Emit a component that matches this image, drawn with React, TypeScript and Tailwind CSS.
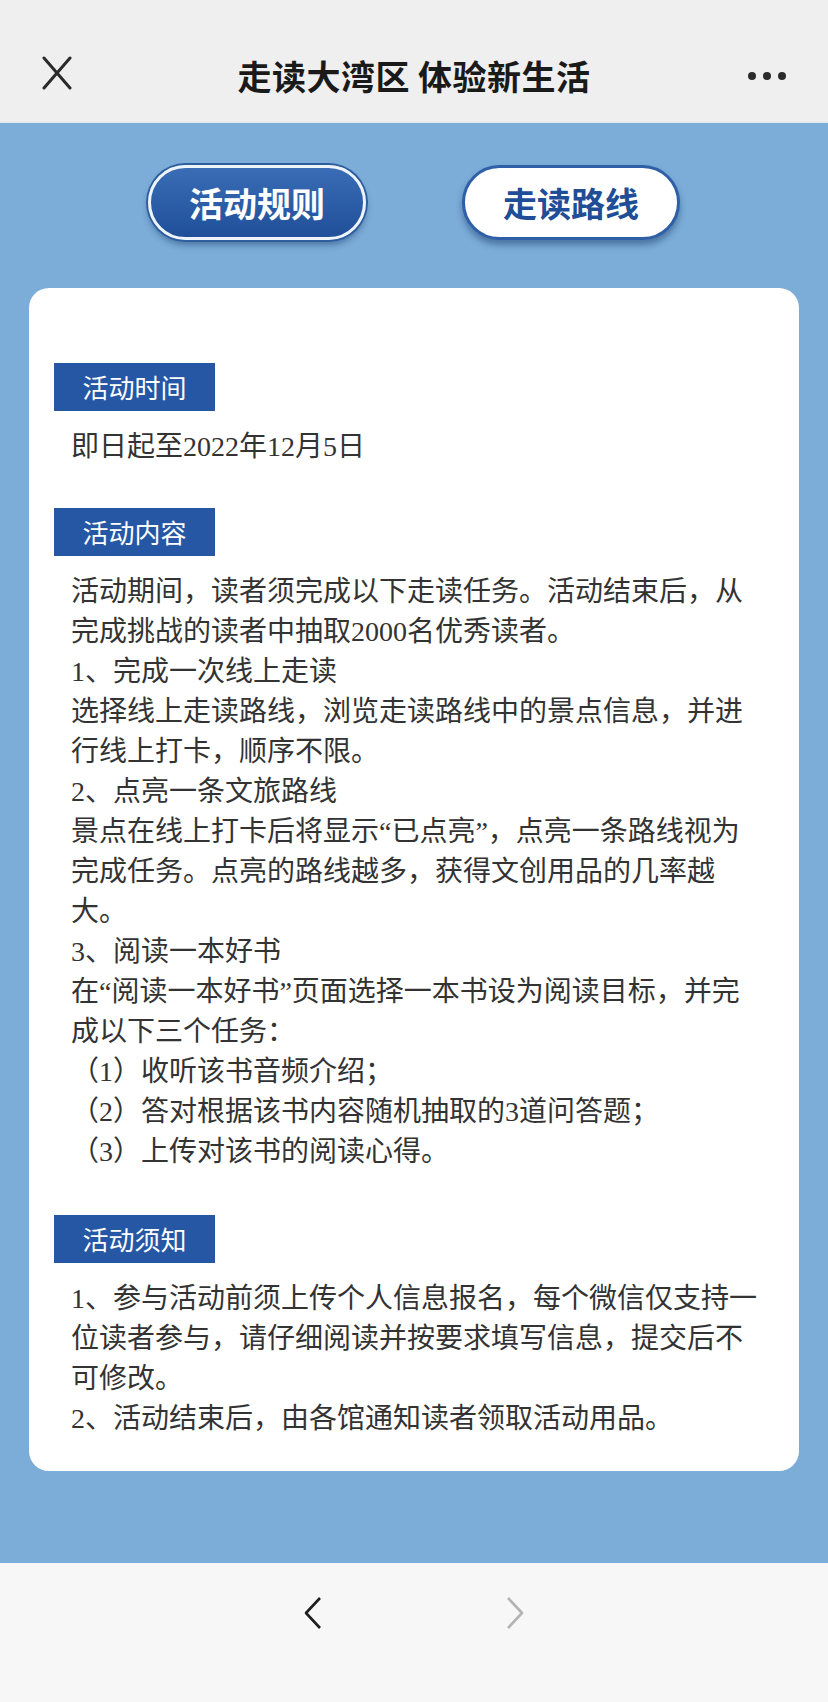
import type { ReactNode } from 'react'

const body = '"Liberation Serif", "Noto Sans CJK SC", serif'
const sans = '"Noto Sans CJK SC", "Noto Sans", sans-serif'

function Label({ children }: { children: ReactNode }) {
  return (
    <div
      className="flex h-[48px] w-[161px] items-center justify-center bg-[#2657a5] text-[26px] leading-none text-white"
      style={{ fontFamily: sans }}
    >
      {children}
    </div>
  )
}

function Block({ lines }: { lines: string[] }) {
  return (
    <div className="ml-[17px] mt-[16px] w-[692px] text-[28px] leading-[40px] text-[#333333]">
      {lines.map((l, i) => (
        <p key={i}>{l}</p>
      ))}
    </div>
  )
}

export default function App() {
  return (
    <div
      lang="zh-CN"
      className="flex h-[1702px] w-[828px] flex-col bg-[#7badd8]"
      style={{ fontFamily: body }}
    >
      {/* top bar */}
      <header className="h-[122px] bg-[#efefef] pt-[44px]">
        <div className="grid h-[64px] grid-cols-[1fr_auto_1fr] items-center px-[42px]">
          <svg width="30" height="34" viewBox="0 0 30 34" className="-mt-[6px]">
            <path d="M2 2 L28 32 M28 2 L2 32" stroke="#2a2a2a" strokeWidth="3" strokeLinecap="round" />
          </svg>
          <h1
            className="text-[34px] font-bold leading-none tracking-[0.5px] text-[#1a1a1a]"
            style={{ fontFamily: sans }}
          >
            走读大湾区 体验新生活
          </h1>
          <div className="flex justify-end gap-[7px] pr-[0px]">
            <span className="h-[8px] w-[8px] rounded-full bg-[#2b2b2b]" />
            <span className="h-[8px] w-[8px] rounded-full bg-[#2b2b2b]" />
            <span className="h-[8px] w-[8px] rounded-full bg-[#2b2b2b]" />
          </div>
        </div>
      </header>

      {/* blue area */}
      <main className="flex-1 border-t border-[#dfe9f2] pt-[42px]">
        <div className="flex justify-center gap-[96px]" style={{ fontFamily: sans }}>
          <button className="flex h-[75px] w-[218px] items-center justify-center rounded-full border-[3px] border-[#eef4fb] bg-gradient-to-b from-[#3a6db6] to-[#1f4f98] text-[34px] font-bold text-white shadow-[0_0_0_2px_#2f5e9f,0_5px_6px_rgba(20,50,100,0.45)]">
            活动规则
          </button>
          <button className="flex h-[75px] w-[218px] items-center justify-center rounded-full border-[3px] border-[#2f5fa6] bg-white text-[34px] font-bold text-[#1f4d97] shadow-[0_5px_6px_rgba(20,50,100,0.45)]">
            走读路线
          </button>
        </div>

        <section className="mx-[29px] mt-[48px] w-[770px] rounded-[20px] bg-white px-[25px] pb-[32px] pt-[75px]">
          <Label>活动时间</Label>
          <Block lines={['即日起至2022年12月5日']} />

          <div className="mt-[41px]">
            <Label>活动内容</Label>
          </div>
          <div className="ml-[17px] mt-[16px] w-[692px] text-[28px] leading-[40px] text-[#333333]">
            <p>活动期间，读者须完成以下走读任务。活动结束后，从完成挑战的读者中抽取2000名优秀读者。</p>
            <p>1、完成一次线上走读</p>
            <p>选择线上走读路线，浏览走读路线中的景点信息，并进行线上打卡，顺序不限。</p>
            <p>2、点亮一条文旅路线</p>
            <p>景点在线上打卡后将显示“已点亮”，点亮一条路线视为完成任务。点亮的路线越多，获得文创用品的几率越大。</p>
            <p>3、阅读一本好书</p>
            <p>在“阅读一本好书”页面选择一本书设为阅读目标，并完成以下三个任务：</p>
            <p>（1）收听该书音频介绍；</p>
            <p>（2）答对根据该书内容随机抽取的3道问答题；</p>
            <p>（3）上传对该书的阅读心得。</p>
          </div>

          <div className="mt-[43px]">
            <Label>活动须知</Label>
          </div>
          <div className="ml-[17px] mt-[16px] w-[692px] text-[28px] leading-[40px] text-[#333333]">
            <p>1、参与活动前须上传个人信息报名，每个微信仅支持一位读者参与，请仔细阅读并按要求填写信息，提交后不可修改。</p>
            <p>2、活动结束后，由各馆通知读者领取活动用品。</p>
          </div>
        </section>
      </main>

      {/* bottom nav */}
      <footer className="flex h-[139px] justify-center gap-[176px] bg-[#f7f7f7] pt-[33px]">
        <svg width="26" height="34" viewBox="0 0 26 34">
          <path d="M20 2 L6 17 L20 32" fill="none" stroke="#1e1e1e" strokeWidth="2.6" strokeLinejoin="round" />
        </svg>
        <svg width="26" height="34" viewBox="0 0 26 34">
          <path d="M6 2 L20 17 L6 32" fill="none" stroke="#b4b4b4" strokeWidth="2.6" strokeLinejoin="round" />
        </svg>
      </footer>
    </div>
  )
}
